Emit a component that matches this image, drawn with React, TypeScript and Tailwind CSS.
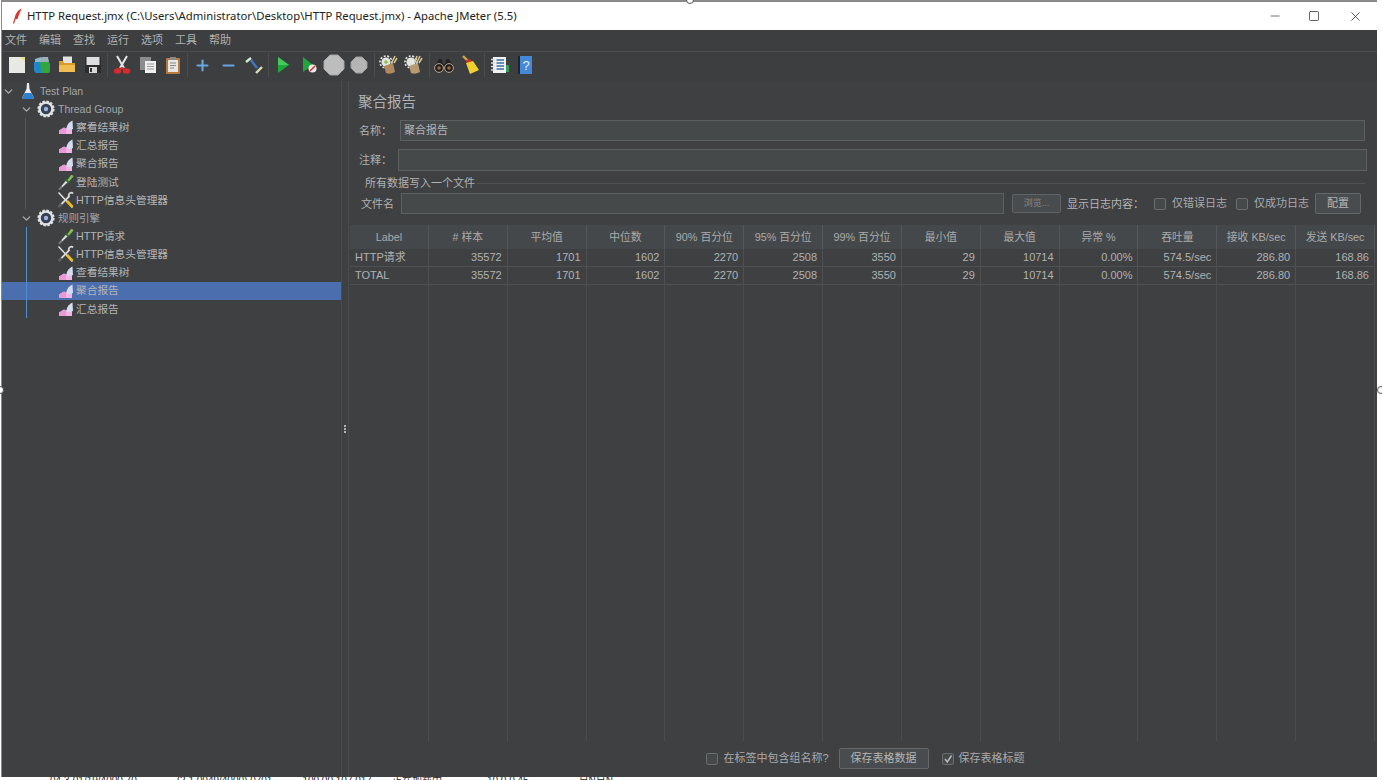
import { ChevronDown, Minus, Plus, Square, X } from "lucide-react";

const font = "font-['Liberation_Sans','Noto_Sans_CJK_SC',sans-serif]";

function ChartIcon() {
  return (
    <svg width="16" height="16" viewBox="0 0 16 16">
      <path d="M1 15 L1 11.5 L6 8.5 L8 9.5 L14 7 L14 15 Z" fill="#f2b4e4" />
      <path d="M1 11.5 L6 8.5 L8 9.5 L8 15 L1 15 Z" fill="#ea98d6" />
      <path d="M8.5 10.5 C8 7 10.5 3.5 14.5 1.5 L15 10 C13 11 10.5 11.5 8.5 10.5 Z" fill="#d5dcf0" />
    </svg>
  );
}

function DropperIcon() {
  return (
    <svg width="16" height="16" viewBox="0 0 16 16">
      <path d="M0.5 15.5 L8 6.5 L10 8 L2 15.5 Z" fill="#dcdcdc" />
      <path d="M1 15.5 L4 12.5" stroke="#777" strokeWidth="1.4" />
      <path d="M8 5.5 L11 8.5" stroke="#356e2f" strokeWidth="2.2" />
      <path d="M9.5 6 L13 1 Q15 0.5 15.5 2.5 L11 7.5 Z" fill="#80bf58" />
    </svg>
  );
}

function ToolsIcon() {
  return (
    <svg width="18" height="18" viewBox="0 0 18 18">
      <path d="M1.5 1.5 L15.5 16.5" stroke="#e5e5e5" strokeWidth="1.4" />
      <path d="M10 10 L15.5 16" stroke="#eebb22" strokeWidth="2.6" />
      <path d="M16 2.5 C14 0.5 11 2.5 12 5.5 L2 15.5" stroke="#dadada" strokeWidth="1.8" fill="none" />
      <path d="M1.5 16 L4.5 13" stroke="#5c5c5c" strokeWidth="2.6" />
    </svg>
  );
}

function GearIcon() {
  return (
    <svg width="18" height="18" viewBox="0 0 18 18">
      <circle cx="9" cy="9" r="6.4" fill="none" stroke="#dfe3e8" strokeWidth="2.4" />
      <circle cx="9" cy="9" r="7.6" fill="none" stroke="#dfe3e8" strokeWidth="2" strokeDasharray="2.4 1.6" />
      <circle cx="9" cy="9" r="4" fill="#33415f" />
      <circle cx="9" cy="9" r="2.2" fill="#9fb3d8" />
    </svg>
  );
}

function FlaskIcon() {
  return (
    <svg width="14" height="18" viewBox="0 0 14 18">
      <path d="M6 1 L8 1 L8.5 7 L12.5 15 Q13 17 11 17 L3 17 Q1 17 1.5 15 L5.5 7 Z" fill="#e8edf3" />
      <path d="M3.7 11 L10.3 11 L12.5 15 Q13 17 11 17 L3 17 Q1 17 1.5 15 Z" fill="#2f7fd0" />
    </svg>
  );
}

function Tool({ children }: { children: React.ReactNode }) {
  return <div className="flex h-[26px] w-[25.3px] shrink-0 items-center justify-center">{children}</div>;
}

function Sep() {
  return <div className="mx-[1.8px] h-[24px] w-px shrink-0 bg-[#4b4d4f]" />;
}

function Toolbar() {
  return (
    <div className="flex h-[30px] shrink-0 items-center border-t border-[#4c4c4c] bg-[#3c3e40] pb-[3px] pl-[2px]">
      <Tool>
        <svg width="18" height="18" viewBox="0 0 18 18">
          <rect x="1" y="1" width="16" height="16" fill="#e9e9e4" />
          <path d="M12 1 L17 1 L17 6 Z" fill="#e7e58a" />
        </svg>
      </Tool>
      <Tool>
        <svg width="18" height="18" viewBox="0 0 18 18">
          <path d="M2 3 L8 1 L10 3 L10 8 L2 8 Z" fill="#8fb6c8" />
          <path d="M9 1 L15 1 L16 6 L9 8 Z" fill="#9bb0b5" />
          <rect x="6" y="6" width="11" height="11" rx="2" fill="#2fa640" />
          <path d="M1 6 L7 6 L8 17 L3 17 Q1 16 1 14 Z" fill="#1e86c9" />
        </svg>
      </Tool>
      <Tool>
        <svg width="18" height="18" viewBox="0 0 18 18">
          <rect x="5" y="0.5" width="9" height="8" fill="#e2e2e2" />
          <path d="M1 5 L5 5 L6 7 L17 7 L17 16 L1 16 Z" fill="#d99a26" />
          <path d="M1 9 L17 9 L17 16 L1 16 Z" fill="#f0bd55" />
        </svg>
      </Tool>
      <Tool>
        <svg width="18" height="18" viewBox="0 0 18 18">
          <rect x="1" y="1" width="16" height="16" fill="#2c2c2c" />
          <rect x="2.5" y="1" width="13" height="8" fill="#dedede" />
          <rect x="5" y="11" width="8" height="6" fill="#d8d8d8" />
          <rect x="6" y="12" width="2" height="4" fill="#333" />
        </svg>
      </Tool>
      <Sep />
      <Tool>
        <svg width="18" height="20" viewBox="0 0 18 20">
          <path d="M4 1 L11 13 M14 1 L7 13" stroke="#e6e6e6" strokeWidth="2" />
          <ellipse cx="4.5" cy="16" rx="3.7" ry="2.8" fill="#d92b2b" />
          <ellipse cx="13.5" cy="16" rx="3.7" ry="2.8" fill="#d92b2b" />
          <path d="M7 13.5 L11 13.5" stroke="#d92b2b" strokeWidth="2" />
        </svg>
      </Tool>
      <Tool>
        <svg width="18" height="18" viewBox="0 0 18 18">
          <rect x="1" y="1" width="11" height="13" fill="#8c8c8c" />
          <rect x="6" y="5" width="11" height="12" fill="#efefef" />
          <path d="M8 8 H15 M8 10.5 H15 M8 13 H15" stroke="#999" />
        </svg>
      </Tool>
      <Tool>
        <svg width="16" height="18" viewBox="0 0 16 18">
          <rect x="1" y="2" width="14" height="16" rx="1" fill="#b77a3c" />
          <rect x="3" y="4" width="10" height="12" fill="#e6e6e6" />
          <rect x="5" y="1" width="6" height="3" fill="#8a8a8a" />
          <path d="M5 7 H11 M5 9.5 H11 M5 12 H9" stroke="#888" />
        </svg>
      </Tool>
      <Sep />
      <Tool>
        <Plus size={17} color="#6aa6e0" strokeWidth={3} />
      </Tool>
      <Tool>
        <Minus size={17} color="#6aa6e0" strokeWidth={3} />
      </Tool>
      <Tool>
        <svg width="20" height="20" viewBox="0 0 20 20">
          <path d="M2 7 L7 3" stroke="#d8e4d0" strokeWidth="2.4" />
          <path d="M7 5 L13 13" stroke="#3d78c4" strokeWidth="2.4" />
          <path d="M12 18 L18 12" stroke="#d8e4b0" strokeWidth="2.4" />
        </svg>
      </Tool>
      <Sep />
      <Tool>
        <svg width="14" height="18" viewBox="0 0 14 18">
          <path d="M2 1 L13 9 L2 17 Z" fill="#1fa83a" />
          <path d="M2 1 L13 9 L2 9 Z" fill="#45c85c" />
        </svg>
      </Tool>
      <Tool>
        <svg width="16" height="18" viewBox="0 0 16 18">
          <path d="M2 1 L12 9 L2 16 Z" fill="#1fa83a" />
          <circle cx="11.5" cy="12.5" r="4" fill="#eee" />
          <path d="M9 15 L14 10" stroke="#d43030" strokeWidth="1.6" />
        </svg>
      </Tool>
      <Tool>
        <svg width="22" height="22" viewBox="0 0 22 22">
          <path d="M7 1 H15 L21 7 V15 L15 21 H7 L1 15 V7 Z" fill="#bdbdbd" stroke="#a5a5a5" />
        </svg>
      </Tool>
      <Tool>
        <svg width="18" height="18" viewBox="0 0 18 18">
          <path d="M6 1 H12 L17 6 V12 L12 17 H6 L1 12 V6 Z" fill="#b5b5b5" stroke="#9d9d9d" />
        </svg>
      </Tool>
      <Sep />
      <Tool>
        <svg width="20" height="20" viewBox="0 0 20 20">
          <circle cx="7" cy="7" r="4.6" fill="#e4e4e0" />
          <circle cx="7" cy="7" r="6" fill="none" stroke="#e4e4e0" strokeWidth="1.6" strokeDasharray="2 1.6" />
          <path d="M5 11 L14 8 L16 17 Q11 20 7 18 Z" fill="#b08a5e" />
          <path d="M13 7 L16 1 M15 8 L18 3" stroke="#d8c890" strokeWidth="1.5" />
          <circle cx="7" cy="7" r="1.8" fill="#8ac04a" />
        </svg>
      </Tool>
      <Tool>
        <svg width="20" height="20" viewBox="0 0 20 20">
          <circle cx="7" cy="7" r="4.6" fill="#e4e4e0" />
          <circle cx="7" cy="7" r="6" fill="none" stroke="#e4e4e0" strokeWidth="1.6" strokeDasharray="2 1.6" />
          <path d="M5 11 L14 8 L16 17 Q11 20 7 18 Z" fill="#b59a72" />
          <path d="M11 7 L13 1 M13 7 L16 1 M15 8 L18 3" stroke="#d8c890" strokeWidth="1.5" />
        </svg>
      </Tool>
      <Sep />
      <Tool>
        <svg width="22" height="16" viewBox="0 0 22 16">
          <path d="M6 2 L9 2 L10 7 L12 7 L13 2 L16 2 L20 9 L2 9 Z" fill="#242424" />
          <circle cx="6" cy="11" r="4.4" fill="#1f1f1f" stroke="#b9a590" />
          <circle cx="16" cy="11" r="4.4" fill="#1f1f1f" stroke="#b9a590" />
          <circle cx="6" cy="11" r="1.8" fill="#a0653a" />
          <circle cx="16" cy="11" r="1.8" fill="#a0653a" />
        </svg>
      </Tool>
      <Tool>
        <svg width="20" height="20" viewBox="0 0 20 20">
          <path d="M3 1 L8 6" stroke="#d4a84a" strokeWidth="2.4" />
          <path d="M6 5 L10 4 L12 7 L7 9 Z" fill="#d22e2e" />
          <path d="M6 8 L13 6 L19 15 L10 19 Z" fill="#f0d030" />
        </svg>
      </Tool>
      <Sep />
      <Tool>
        <svg width="20" height="18" viewBox="0 0 20 18">
          <rect x="3" y="1" width="13" height="16" fill="#eef2f6" />
          <path d="M1 3.5 H5 M1 7 H5 M1 10.5 H5 M1 14 H5" stroke="#ddd" strokeWidth="1.6" />
          <path d="M6.5 4 H14 M6.5 7 H14 M6.5 10 H14 M6.5 13 H14" stroke="#3f6f9f" strokeWidth="1.4" />
          <rect x="16" y="9" width="3" height="7" fill="#3a9a55" />
        </svg>
      </Tool>
      <Tool>
        <svg width="16" height="20" viewBox="0 0 16 20">
          <rect x="1" y="1" width="3" height="18" fill="#20242a" />
          <rect x="3" y="1" width="12" height="18" fill="#4488d8" />
          <text x="9" y="15" fontSize="13" textAnchor="middle" fill="#e6eef8" fontFamily="Liberation Sans, sans-serif">?</text>
        </svg>
      </Tool>
    </div>
  );
}

type Node = { label: string; kind: "chart" | "dropper" | "tools"; selected?: boolean };

const groupOne: Node[] = [
  { label: "察看结果树", kind: "chart" },
  { label: "汇总报告", kind: "chart" },
  { label: "聚合报告", kind: "chart" },
  { label: "登陆测试", kind: "dropper" },
  { label: "HTTP信息头管理器", kind: "tools" },
];

const groupTwo: Node[] = [
  { label: "HTTP请求", kind: "dropper" },
  { label: "HTTP信息头管理器", kind: "tools" },
  { label: "查看结果树", kind: "chart" },
  { label: "聚合报告", kind: "chart", selected: true },
  { label: "汇总报告", kind: "chart" },
];

function Leaf({ node }: { node: Node }) {
  return (
    <div className={`flex h-[18.17px] items-center pl-[54px] ${node.selected ? "bg-[#4b6eaf]" : ""}`}>
      <div className="flex w-[20px] shrink-0 items-center justify-center">
        {node.kind === "chart" && <ChartIcon />}
        {node.kind === "dropper" && <DropperIcon />}
        {node.kind === "tools" && <ToolsIcon />}
      </div>
      <span className="text-[10.7px] leading-none text-[#b4b6b7]">{node.label}</span>
    </div>
  );
}

function GroupRow({ label }: { label: string }) {
  return (
    <div className="flex h-[18.17px] items-center pl-[17.5px]">
      <ChevronDown size={13} color="#a9acae" strokeWidth={2.5} className="shrink-0" />
      <div className="ml-[4.5px] flex w-[18px] shrink-0 items-center justify-center">
        <GearIcon />
      </div>
      <span className="ml-[3px] text-[10.5px] leading-none text-[#a4a7a9]">{label}</span>
    </div>
  );
}

function Tree() {
  return (
    <div className="w-[339px] shrink-0 pt-[1px]">
      <div className="flex h-[18.17px] items-center">
        <ChevronDown size={13} color="#a9acae" strokeWidth={2.5} className="shrink-0" />
        <div className="ml-[5px] flex w-[16px] shrink-0 items-center justify-center">
          <FlaskIcon />
        </div>
        <span className="ml-[4px] text-[10.5px] leading-none text-[#a4a7a9]">Test Plan</span>
      </div>
      <GroupRow label="Thread Group" />
      <div className="relative">
        <span className="absolute bottom-0 left-[23px] top-0 w-px bg-[#55585a]" />
        {groupOne.map((n, i) => (
          <Leaf key={i} node={n} />
        ))}
      </div>
      <GroupRow label="规则引擎" />
      <div className="relative">
        <span className="absolute bottom-0 left-[24px] top-0 w-px bg-[#4f8fd0]" />
        {groupTwo.map((n, i) => (
          <Leaf key={i} node={n} />
        ))}
      </div>
    </div>
  );
}

function Check({ checked }: { checked?: boolean }) {
  return (
    <span className="flex size-[12px] shrink-0 items-center justify-center rounded-[2px] border border-[#6a6d6f] bg-[#45494a]">
      {checked && (
        <svg width="10" height="10" viewBox="0 0 10 10">
          <path d="M2 5 L4.3 8 L8.5 1.5" fill="none" stroke="#b8babb" strokeWidth="1.5" />
        </svg>
      )}
    </span>
  );
}

const columns = [
  "Label",
  "# 样本",
  "平均值",
  "中位数",
  "90% 百分位",
  "95% 百分位",
  "99% 百分位",
  "最小值",
  "最大值",
  "异常 %",
  "吞吐量",
  "接收 KB/sec",
  "发送 KB/sec",
];

const rows = [
  ["HTTP请求", "35572", "1701", "1602", "2270", "2508", "3550", "29", "10714", "0.00%", "574.5/sec", "286.80", "168.86"],
  ["TOTAL", "35572", "1701", "1602", "2270", "2508", "3550", "29", "10714", "0.00%", "574.5/sec", "286.80", "168.86"],
];

function ResultTable() {
  return (
    <div className="relative mt-[11px] flex min-h-0 flex-1 flex-col">
      <div className="grid h-[24px] shrink-0 grid-cols-13 bg-[#45484a]">
        {columns.map((c) => (
          <div key={c} className="flex items-center justify-center border-r border-[#55585a] text-[10.8px] leading-none text-[#a9abac]">
            {c}
          </div>
        ))}
      </div>
      {rows.map((r) => (
        <div key={r[0]} className="grid h-[18px] shrink-0 grid-cols-13 border-b border-[#4e5153]">
          {r.map((v, i) => (
            <div
              key={i}
              className={`flex items-center border-r border-[#4e5153] px-[5px] text-[11px] leading-none text-[#b0b2b3] ${i === 0 ? "justify-start" : "justify-end"}`}
            >
              {v}
            </div>
          ))}
        </div>
      ))}
      <div className="grid min-h-0 flex-1 grid-cols-13">
        {columns.map((c) => (
          <div key={c} className="border-r border-[#4a4d4f]" />
        ))}
      </div>
    </div>
  );
}

function Panel() {
  return (
    <div className="flex min-w-0 flex-1 flex-col pl-[1px] pr-[2px]">
      <div className="pl-[8px] pt-[11px] text-[14.5px] leading-[20px] text-[#b0b2b3]">聚合报告</div>
      <div className="mt-[8px] flex h-[21px] items-center pl-[9px] pr-[10px]">
        <span className="w-[41px] shrink-0 pt-[1px] text-[11px] text-[#b0b2b3]">名称：</span>
        <div className="flex h-full flex-1 items-center border border-[#5c6062] bg-[#45494a] px-[3px] text-[11px] leading-none text-[#b4b6b7]">
          聚合报告
        </div>
      </div>
      <div className="mt-[8px] flex h-[22px] items-center pl-[9px] pr-[8px]">
        <span className="w-[39px] shrink-0 pt-[1px] text-[11px] text-[#b0b2b3]">注释：</span>
        <div className="h-full flex-1 border border-[#5c6062] bg-[#45494a]" />
      </div>
      <div className="mt-[4px] flex h-[16px] items-center pl-[15px] pr-[10px]">
        <span className="text-[11px] leading-none text-[#b0b2b3]">所有数据写入一个文件</span>
        <div className="ml-[2px] h-px flex-1 bg-[#505355]" />
      </div>
      <div className="mt-[2px] flex h-[21px] items-center pl-[11px]">
        <span className="w-[40px] shrink-0 pt-[2px] text-[11px] text-[#b0b2b3]">文件名</span>
        <div className="h-full w-[603px] shrink-0 border border-[#5c6062] bg-[#45494a]" />
        <button type="button" className="ml-[8px] h-[19px] w-[49px] shrink-0 rounded-[2px] border border-[#5f6365] bg-[#484c4e] text-[9px] leading-none text-[#85888a]">
          浏览...
        </button>
        <span className="ml-[6px] w-[87px] shrink-0 pt-[2px] text-[11px] text-[#b4b6b7]">显示日志内容：</span>
        <Check />
        <span className="ml-[6px] w-[64px] shrink-0 text-[11px] text-[#a9abac]">仅错误日志</span>
        <Check />
        <span className="ml-[6px] w-[61px] shrink-0 text-[11px] text-[#a9abac]">仅成功日志</span>
        <button type="button" className="h-[21px] w-[46px] shrink-0 rounded-[2px] border border-[#646869] bg-[#484c4e] text-[11px] leading-none text-[#b4b6b7]">
          配置
        </button>
      </div>
      <ResultTable />
      <div className="flex h-[36px] shrink-0 items-center justify-center pb-[1px] pl-[6px]">
        <Check />
        <span className="ml-[5px] text-[11px] text-[#a9abac]">在标签中包含组名称?</span>
        <button type="button" className="ml-[10px] h-[21px] w-[90px] rounded-[2px] border border-[#646869] bg-[#484c4e] text-[11px] leading-none text-[#b4b6b7]">
          保存表格数据
        </button>
        <span className="ml-[13px]">
          <Check checked />
        </span>
        <span className="ml-[5px] text-[11px] text-[#a9abac]">保存表格标题</span>
      </div>
    </div>
  );
}

export default function App() {
  return (
    <div className={`relative flex h-[780px] w-[1382px] flex-col overflow-hidden bg-white ${font}`}>
      <span className="absolute left-[686px] top-[-4px] z-10 size-[8px] rounded-full border border-[#555] bg-white" />
      <span className="absolute left-[-4px] top-[386px] z-10 size-[8px] rounded-full border border-[#555] bg-white" />
      <span className="absolute left-[1377px] top-[386px] z-10 size-[8px] rounded-full border border-[#555] bg-white" />
      <div className="ml-[1px] mr-[5px] flex min-h-0 flex-1 flex-col border-l border-t-2 border-[#8a8a8a]">
        <div className="flex h-[28px] shrink-0 items-center bg-white">
          <svg width="12" height="16" viewBox="0 0 12 16" className="ml-[9px]">
            <path d="M10.5 0.5 C6.5 2.5 4 6.5 3.5 11 L6.5 11 C7.5 7 9.5 4 10.5 0.5 Z" fill="#d8362a" />
            <path d="M4 11 L2.5 15.5" stroke="#c9362a" strokeWidth="1.2" />
          </svg>
          <span className="ml-[4px] font-['Noto_Sans',sans-serif] text-[11.3px] leading-none text-[#222]">
            HTTP Request.jmx (C:\Users\Administrator\Desktop\HTTP Request.jmx) - Apache JMeter (5.5)
          </span>
          <div className="ml-auto flex items-center pr-[1px]">
            <div className="flex w-[38px] justify-center">
              <Minus size={14} color="#333" strokeWidth={1.2} />
            </div>
            <div className="flex w-[40px] justify-center">
              <Square size={12} color="#222" strokeWidth={1.4} />
            </div>
            <div className="flex w-[42px] justify-center">
              <X size={15} color="#222" strokeWidth={1.2} />
            </div>
          </div>
        </div>
        <div className="flex h-[21px] shrink-0 items-center gap-[12px] bg-[#3c3e40] pl-[3px] text-[11px] leading-none text-[#b0b2b3]">
          {["文件", "编辑", "查找", "运行", "选项", "工具", "帮助"].map((m) => (
            <span key={m}>{m}</span>
          ))}
        </div>
        <Toolbar />
        <div className="flex min-h-0 flex-1 bg-[#3e4042]">
          <Tree />
          <div className="flex w-[8px] shrink-0 flex-col items-center justify-center gap-[1px] border-x border-[#4a4d4f] pb-[1px]">
            <span className="size-[2px] bg-[#b5b5b5]" />
            <span className="size-[2px] bg-[#b5b5b5]" />
            <span className="size-[2px] bg-[#b5b5b5]" />
          </div>
          <Panel />
        </div>
      </div>
      <div className="flex h-[3px] shrink-0 overflow-hidden text-[10px] leading-[8px] whitespace-nowrap text-[#222]">
        <span className="ml-[50px]">04 3-01/19/4000 70</span>
        <span className="ml-[40px]">(2.1 0049/4000) 0701</span>
        <span className="ml-[30px]">100 00 107 017</span>
        <span className="ml-[20px]">正在加载中</span>
        <span className="ml-[45px]">10.0.0.45</span>
        <span className="ml-[50px]">日N日N</span>
      </div>
    </div>
  );
}
